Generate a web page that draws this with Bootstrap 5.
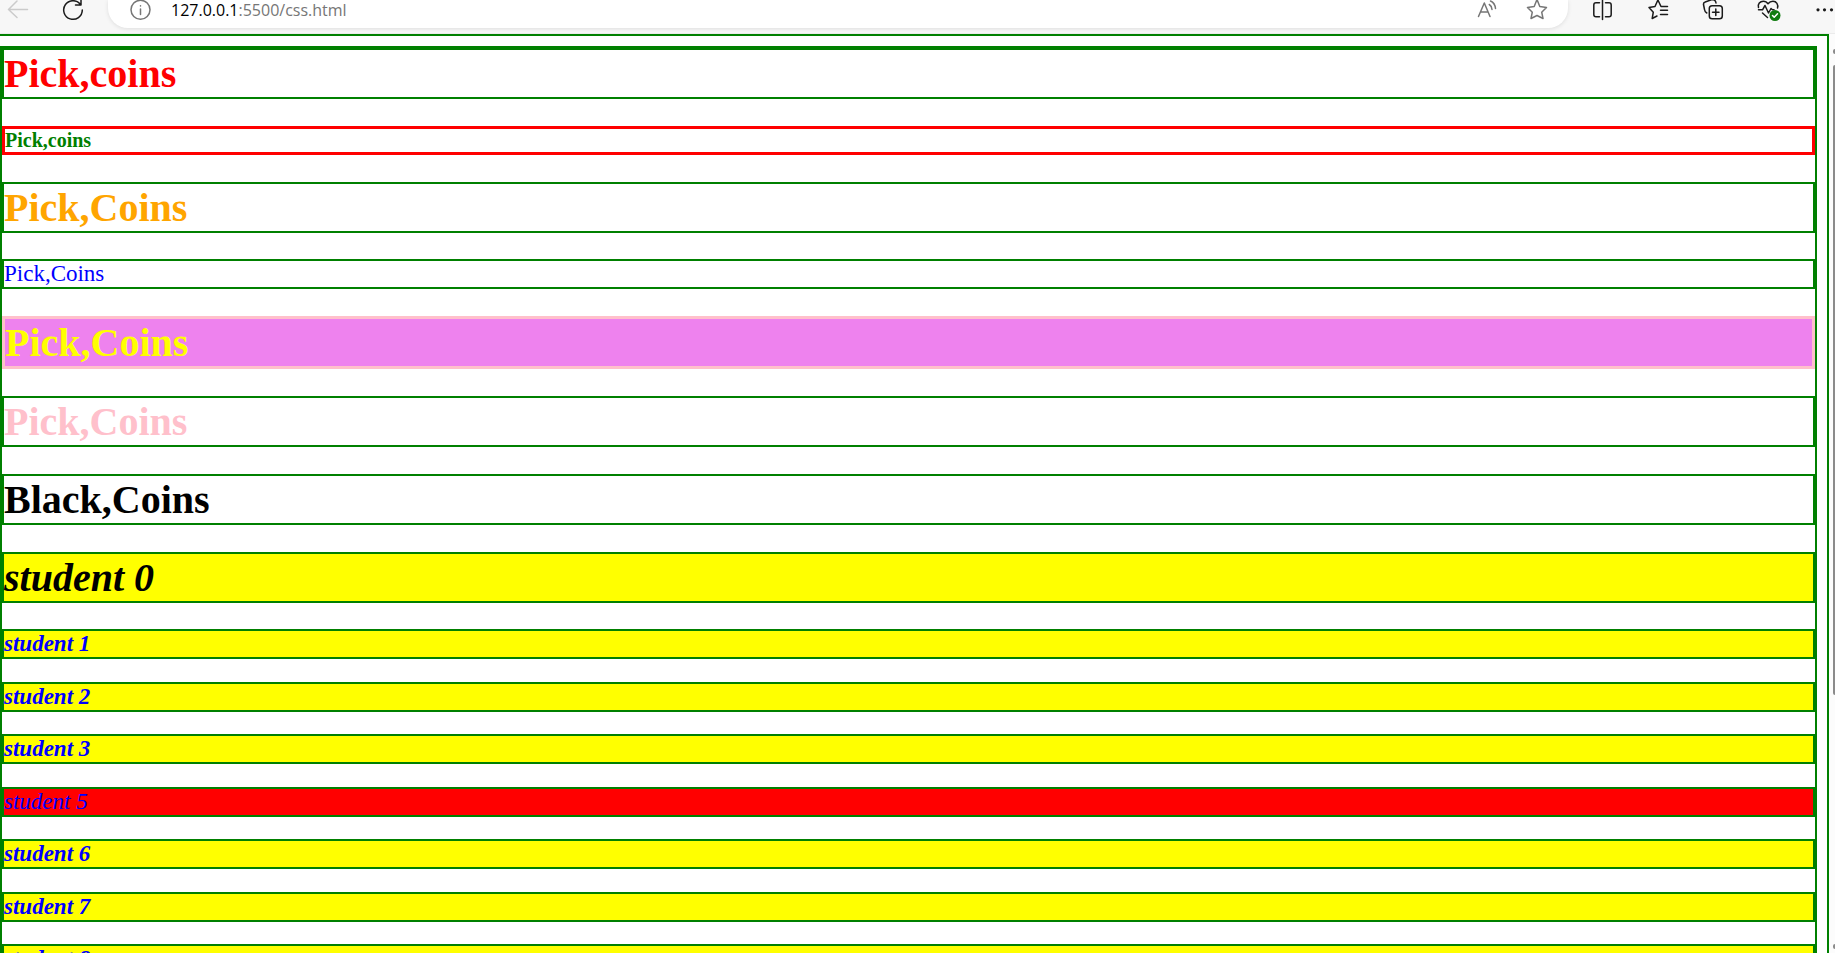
<!DOCTYPE html>
<html lang="en">
<head>
<meta charset="utf-8">
<meta name="viewport" content="width=device-width, initial-scale=1">
<title>css.html</title>
<link rel="stylesheet" href="https://cdn.jsdelivr.net/npm/bootstrap@5.3.0/dist/css/bootstrap.min.css">
<style>
  .toolbar { height: 34px; background: #f7f7f7; border-bottom: 1px solid #ebebeb; padding-left: 6px; padding-right: 1px; }
  .toolbar svg { display: block; width: 24px; height: 28px; overflow: visible; fill: none; stroke: #1b1b1b; stroke-width: 1.5; stroke-linecap: round; stroke-linejoin: round; }
  .tool { padding: 0; border: 0; background: none; }
  .tools { gap: 31px; }
  .address { height: 28px; margin-left: 23px; margin-right: 22px; padding-left: 21px; padding-right: 19px; background: #fff; border-radius: 0 0 20px 20px; box-shadow: 0 1px 4px #0000001a; }
  .toolbar .address svg { stroke: #767676; }
  .url { margin-left: 18px; font: 16px/20px "Open Sans", sans-serif; color: #767676; outline: 0; white-space: nowrap; }
  .url b { font-weight: 400; color: #000; }
  .address-tools { gap: 25px; }

  .sheet { border: solid green; border-width: 2px 2px 0 0; padding: 10px 10px 0 0; font-family: "Liberation Serif", serif; color: #000; }
  .frame { border: 2px solid green; border-bottom: 0; }
  .frame > *, .students > li { border: 2px solid green; margin: 0 0 27px; }
  .frame h1 { font-size: 40px; line-height: 47px; font-weight: 700; }
  .frame h5 { font-size: 20px; line-height: 23px; font-weight: 700; border: 3px solid red; color: green; }
  .frame p { font-size: 23px; line-height: 26px; color: blue; }
  .frame .tight { margin-bottom: 26px; }
  .frame .violet { background: violet; border: 3px solid pink; color: yellow; }
  .frame .student { background: yellow; font-style: italic; }
  .frame .students { border: 0; margin: 0; }
  .students > li { background: yellow; font: italic 700 23px/26px "Liberation Serif", serif; color: blue; margin-bottom: 22px; }
  .students > li:nth-child(odd) { margin-bottom: 23px; }
  .students > .absent { background: red; font-weight: 400; }

  .track { width: 6px; background: #fcfcfc; padding: 15px 0 4px 4px; }
  .thumb { height: 70%; margin-top: 11px; background: #8b8b8b; border-radius: 3px 0 0 3px; }
  .arrow { height: 5px; background: #8b8b8b; border-radius: 2px 0 0 2px; }
</style>
</head>
<body class="vh-100 overflow-hidden d-flex flex-column bg-white">
<header class="toolbar d-flex flex-shrink-0 align-items-start">
  <div class="tools d-flex">
    <button class="tool" aria-label="Back"><svg style="stroke:#cbcbcb"><path d="M21.500 9.500H2.500M11 1 2.500 9.500 11 17.500"/></svg></button>
    <button class="tool" aria-label="Reload"><svg><path d="M19.500 4.500A9.300 9.300 0 1 0 21.300 10M20 0V5H14.500"/></svg></button>
  </div>
  <div class="address d-flex flex-grow-1">
    <button class="tool" aria-label="Site information"><svg><circle cx="11.500" cy="9.800" r="9.500"/><path d="M11.500 9V14.500M11.500 5.800V6"/></svg></button>
    <div class="url flex-grow-1" role="textbox" contenteditable="true" spellcheck="false" aria-label="Address"><b>127.0.0.1</b>:5500/css.html</div>
    <div class="address-tools d-flex">
      <button class="tool" aria-label="Read aloud"><svg><path d="M2.500 16.500 8.300 3 14 16.500M4.500 12H12M13.300 4.500Q15.800 6 16 9.500M14.500 1Q19 3 19.500 8.500"/></svg></button>
      <button class="tool" aria-label="Add to favorites"><svg><path d="M12-.5 14.800 6.500 21.500 7.500 16.700 12.200 18 18.500 12 15.500 6 18.500 7.300 12.200 2.500 7.500 9.200 6.500Z"/></svg></button>
    </div>
  </div>
  <div class="tools d-flex">
    <button class="tool" aria-label="Split screen"><svg><path d="M9.500 2.800H6Q3.800 2.800 3.800 5V14.500Q3.800 16.800 6 16.800H9.500M15.500 2.800H19Q21.200 2.800 21.200 5V14.500Q21.200 16.800 19 16.800H15.500M12.500 0V19.500"/></svg></button>
    <button class="tool" aria-label="Favorites"><svg><path d="M22.500 6.500H16L12.900 0 10 6.500 4 7.500 8.300 12.200 7.200 18.500 12 16M15.500 10.300H22.500M15.500 14.500H22.500"/></svg></button>
    <button class="tool" aria-label="Collections"><svg><rect x="9.300" y="5.800" width="13" height="13" rx="2.800"/><path d="M15.800 9V15.500M12.500 12.200H19M6.800 13Q4.800 12 4.500 9.500L3.500 4.500Q3.300 2.500 5.200 2L12-.5Q15.500-.5 16 3"/></svg></button>
    <button class="tool" aria-label="Browser essentials"><svg><path d="M3.500 7.500C2.500 4 5 1.200 8.300 1.200 11 1.200 12.200 2.500 13 3.800 14 2.500 15.500 1.200 18 1.200 21.500 1.200 23.500 4.500 22.500 8M3.500 9.800H7.500L10 5.500 13.500 13 16 8.500 17.500 9.800H19M7.500 13 12.500 17.500"/><circle cx="20" cy="15.500" r="5.500" fill="#107c10" stroke="none"/><path stroke="#fff" style="stroke:#fff" d="M17.500 15.500 19.200 17.200 22.500 13.800"/></svg></button>
    <button class="tool" aria-label="Settings and more"><svg style="fill:#1b1b1b;stroke:none"><circle cx="8" cy="9.800" r="1.600"/><circle cx="14.500" cy="9.800" r="1.600"/><circle cx="21.500" cy="9.800" r="1.600"/></svg></button>
  </div>
</header>

<div class="d-flex flex-grow-1 overflow-hidden">
  <main class="sheet flex-grow-1">
    <div class="frame">
      <h1 style="color:red">Pick,coins</h1>
      <h5>Pick,coins</h5>
      <h1 class="tight" style="color:orange">Pick,Coins</h1>
      <p>Pick,Coins</p>
      <h1 class="violet">Pick,Coins</h1>
      <h1 style="color:pink">Pick,Coins</h1>
      <h1>Black,Coins</h1>
      <h1 class="student tight">student 0</h1>
      <ul class="students list-unstyled">
        <li>student 1</li>
        <li>student 2</li>
        <li>student 3</li>
        <li class="absent">student 5</li>
        <li>student 6</li>
        <li>student 7</li>
        <li>student 8</li>
      </ul>
    </div>
  </main>
  <div class="track d-flex flex-column flex-shrink-0" aria-hidden="true">
    <div class="arrow"></div>
    <div class="thumb"></div>
    <div class="arrow mt-auto"></div>
  </div>
</div>
<script src="https://cdn.jsdelivr.net/npm/bootstrap@5.3.0/dist/js/bootstrap.bundle.min.js"></script>
</body>
</html>
